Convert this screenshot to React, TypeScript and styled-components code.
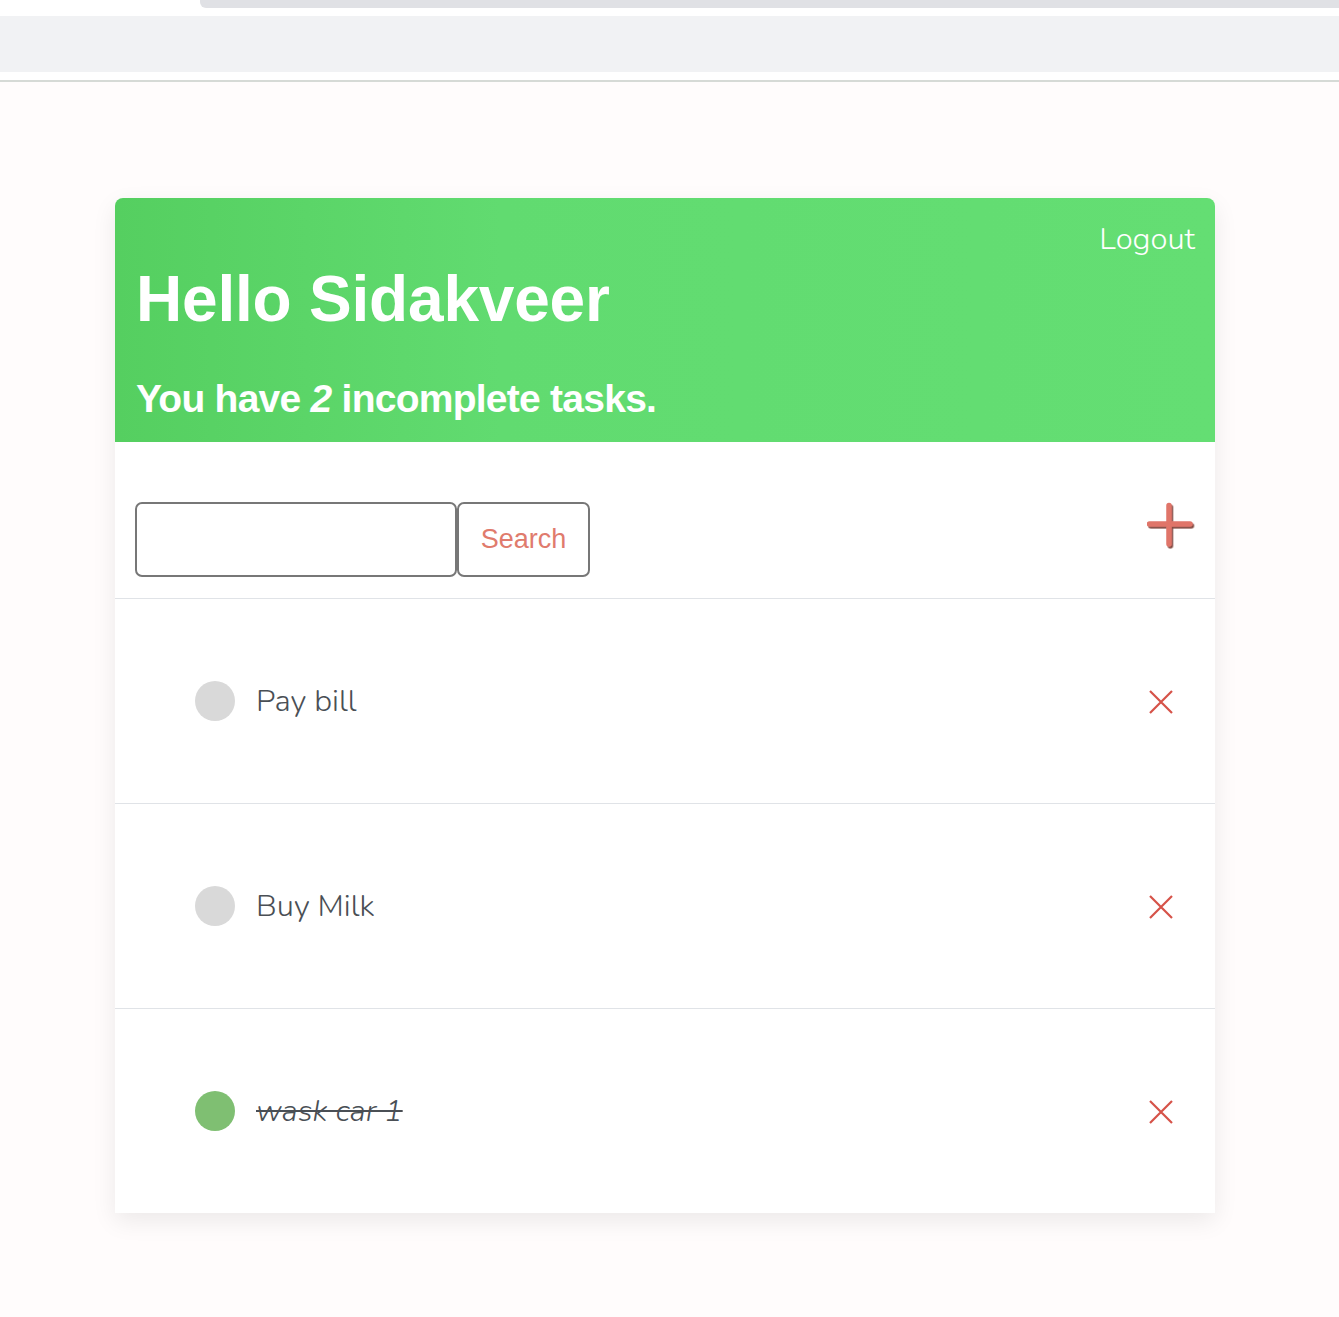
import React from "react";
import styled, { createGlobalStyle } from "styled-components";

const Global = createGlobalStyle`
  html, body { margin: 0; padding: 0; }
  body { background: #fffcfc; font-family: "Liberation Sans", Arial, sans-serif; }
`;

const Chrome = styled.div`
  display: flex;
  flex-direction: column;
  background: #ffffff;
`;

const TabStrip = styled.div`
  height: 8px;
  margin-left: 200px;
  background: #e0e1e5;
  border-bottom-left-radius: 6px;
`;

const Toolbar = styled.div`
  height: 56px;
  margin-top: 8px;
  background: #f1f2f4;
`;

const ChromeRule = styled.div`
  height: 2px;
  margin-top: 8px;
  background: #d6dad6;
`;

const Page = styled.main`
  padding: 116px 124px 100px 115px;
`;

const Card = styled.section`
  width: 1100px;
  background: #ffffff;
  border-radius: 8px 8px 0 0;
  box-shadow: 0 8px 24px rgba(0, 0, 0, 0.08);
`;

const Header = styled.header`
  display: flex;
  flex-direction: column;
  padding: 21px 20px 0 21px;
  height: 244px;
  box-sizing: border-box;
  border-radius: 8px 8px 0 0;
  background: linear-gradient(90deg, #55cf60 0%, #61db70 35%, #64de73 100%);
  color: #ffffff;
`;

const Logout = styled.a`
  align-self: flex-end;
  font-family: "Nunito", "Lato", sans-serif;
  font-weight: 300;
  font-size: 31px;
  line-height: 40px;
  color: #ffffff;
  cursor: pointer;
`;

const Title = styled.h1`
  margin: 3px 0 0;
  font-size: 64px;
  line-height: 74px;
  font-weight: 700;
  letter-spacing: -0.2px;
`;

const Subtitle = styled.p`
  margin: 41px 0 0;
  font-size: 39px;
  line-height: 44px;
  font-weight: 700;
  letter-spacing: -0.75px;
`;

const Toolbar2 = styled.div`
  display: flex;
  align-items: flex-start;
  padding: 60px 20px 21px 20px;
  border-bottom: 1px solid #e0e3e7;
`;

const SearchInput = styled.input`
  width: 322px;
  height: 75px;
  box-sizing: border-box;
  border: 2px solid #777777;
  border-radius: 7px;
  background: #ffffff;
  font-size: 26px;
  padding: 0 12px;
  outline: none;
`;

const SearchButton = styled.button`
  width: 133px;
  height: 75px;
  box-sizing: border-box;
  border: 2px solid #777777;
  border-radius: 7px;
  background: #ffffff;
  color: #e07b6d;
  font-family: "Liberation Sans", Arial, sans-serif;
  font-size: 27px;
  padding: 0;
  cursor: pointer;
`;

const Spacer = styled.div`
  flex: 1;
`;

const AddButton = styled.button`
  width: 48px;
  height: 48px;
  border: none;
  background: none;
  padding: 0;
  margin-right: 0;
  display: flex;
  cursor: pointer;
`;

const List = styled.ul`
  list-style: none;
  margin: 0;
  padding: 0;
`;

const Row = styled.li`
  display: flex;
  align-items: center;
  height: 204px;
  padding: 0 40px 0 80px;
  & + & {
    border-top: 1px solid #e0e3e7;
  }
`;

const Dot = styled.span<{ $done?: boolean }>`
  width: 40px;
  height: 40px;
  border-radius: 50%;
  background: ${(p) => (p.$done ? "#7fbf72" : "#d9d9d9")};
  flex-shrink: 0;
`;

const Label = styled.span<{ $done?: boolean }>`
  margin-left: 21px;
  font-family: "Nunito", "Lato", sans-serif;
  font-weight: 300;
  font-size: 31px;
  color: #4a4f55;
  font-style: ${(p) => (p.$done ? "italic" : "normal")};
  text-decoration: ${(p) => (p.$done ? "line-through" : "none")};
  text-decoration-thickness: 2px;
  flex: 1;
`;

const Remove = styled.button`
  width: 28px;
  height: 28px;
  border: none;
  background: none;
  padding: 0;
  display: flex;
  cursor: pointer;
  margin-top: 2px;
`;

const Cross = () => (
  <svg width="28" height="28" viewBox="0 0 28 28">
    <path d="M3 3 L25 25 M25 3 L3 25" stroke="#d65248" strokeWidth="2.2" fill="none" />
  </svg>
);

const Plus = () => (
  <svg width="48" height="48" viewBox="0 0 48 48">
    <defs>
      <filter id="sh" x="-20%" y="-20%" width="140%" height="140%">
        <feDropShadow dx="1.4" dy="1.8" stdDeviation="0.7" floodColor="#6e2a22" floodOpacity="0.85" />
      </filter>
    </defs>
    <path
      d="M22 3.5 L22 42 M2.5 22 L43 22"
      stroke="#e07469"
      strokeWidth="5.5"
      strokeLinecap="round"
      fill="none"
      filter="url(#sh)"
    />
  </svg>
);

const tasks = [
  { id: 1, text: "Pay bill", done: false },
  { id: 2, text: "Buy Milk", done: false },
  { id: 3, text: "wask car 1", done: true },
];

export default function App() {
  const remaining = tasks.filter((t) => !t.done).length;
  return (
    <>
      <Global />
      <Chrome>
        <TabStrip />
        <Toolbar />
        <ChromeRule />
      </Chrome>
      <Page>
        <Card>
          <Header>
            <Logout>Logout</Logout>
            <Title>Hello Sidakveer</Title>
            <Subtitle>
              You have <em>{remaining}</em> incomplete tasks.
            </Subtitle>
          </Header>
          <Toolbar2>
            <SearchInput aria-label="search" />
            <SearchButton>Search</SearchButton>
            <Spacer />
            <AddButton aria-label="add">
              <Plus />
            </AddButton>
          </Toolbar2>
          <List>
            {tasks.map((t) => (
              <Row key={t.id}>
                <Dot $done={t.done} />
                <Label $done={t.done}>{t.text}</Label>
                <Remove aria-label="remove">
                  <Cross />
                </Remove>
              </Row>
            ))}
          </List>
        </Card>
      </Page>
    </>
  );
}
